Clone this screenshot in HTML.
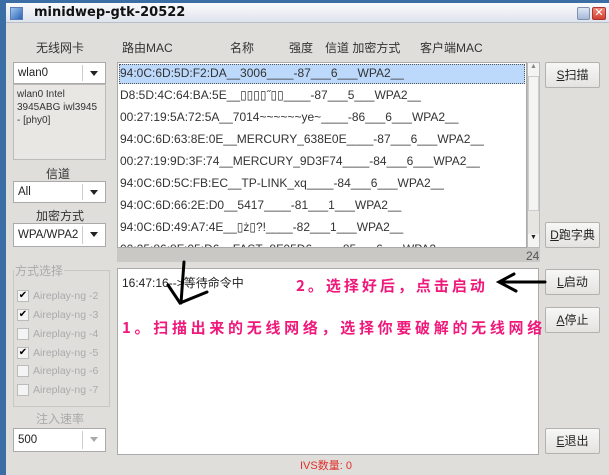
<!DOCTYPE html>
<html><head><meta charset="utf-8"><style>
*{margin:0;padding:0;box-sizing:border-box}
body{width:609px;height:475px;overflow:hidden;background:#3a6ea5;font-family:"Liberation Sans","Noto Sans CJK SC",sans-serif;font-size:12px;color:#222;position:relative}
.win{position:absolute;left:6px;top:3px;right:0;bottom:0;background:#dfdedb}
.title{position:absolute;left:6px;top:3px;right:0;height:20px;background:linear-gradient(#fafbfd,#dfe3ec);border-bottom:1px solid #b9bfca}
.title span{position:absolute;left:28px;top:2px;font-family:"DejaVu Sans",sans-serif;font-weight:bold;font-size:13px;color:#111}
.ab{position:absolute}
.lbl{position:absolute;font-size:12px;color:#333;white-space:nowrap}
.combo{position:absolute;background:#fff;border:1px solid #aaa;font-size:11.5px;padding:0 4px;line-height:20px;white-space:nowrap}
.combo:after{content:"";position:absolute;right:0;top:2px;bottom:2px;width:22px;border-left:1px solid #ccc;background:#fff}
.combo i{position:absolute;right:7px;top:8px;border:4px solid transparent;border-top:5px solid #222;z-index:2}
.btn{position:absolute;left:545px;width:55px;height:26px;background:linear-gradient(#f7f7f6,#e4e3e0);border:1px solid #b3b2ae;border-radius:2px;text-align:center;line-height:24px;font-size:12px;color:#222}
.row{position:absolute;left:120px;font-size:12px;white-space:nowrap;color:#333}
.cb{position:absolute;left:17px;width:12px;height:12px;border:1px solid #bbb;background:#f4f4f4;font-size:10px;line-height:10px;text-align:center;color:#000}
.cbl{position:absolute;left:33px;font-size:10.5px;color:#aaa}
.pink{position:absolute;color:#f0187a;font-weight:bold;font-size:15px;white-space:nowrap;font-family:"Noto Sans CJK SC",sans-serif;z-index:5}
</style></head><body>
<div class="win"></div>
<div class="title"><span>minidwep-gtk-20522</span></div>
<div class="ab" style="left:10px;top:7px;width:13px;height:13px;background:linear-gradient(135deg,#9cc7f1,#2c62b5);border:1px solid #5a7db5"></div>
<div class="ab" style="left:577px;top:7px;width:13px;height:13px;background:linear-gradient(#dde6f4,#a7b9d8);border:1px solid #7f90b0;border-radius:2px"></div>
<div class="ab" style="left:592px;top:7px;width:14px;height:13px;background:linear-gradient(#f08a7a,#d2402f);border:1px solid #a33;border-radius:2px;color:#fff;font-size:11px;line-height:11px;text-align:center">✕</div>

<div class="lbl" style="left:36px;top:39px">无线网卡</div>
<div class="lbl" style="left:122px;top:39px">路由MAC</div>
<div class="lbl" style="left:230px;top:39px">名称</div>
<div class="lbl" style="left:289px;top:39px">强度</div>
<div class="lbl" style="left:325px;top:39px">信道 加密方式</div>
<div class="lbl" style="left:420px;top:39px">客户端MAC</div>

<div class="combo" style="left:13px;top:62px;width:93px;height:22px">wlan0<i></i></div>
<div class="ab" style="left:13px;top:84px;width:93px;height:76px;border:1px solid #bbb;background:#e8e7e4;font-size:10px;padding:3px;line-height:13px;color:#333">wlan0 Intel 3945ABG iwl3945 - [phy0]</div>
<div class="lbl" style="left:46px;top:165px">信道</div>
<div class="combo" style="left:13px;top:181px;width:93px;height:22px">All<i></i></div>
<div class="lbl" style="left:36px;top:207px">加密方式</div>
<div class="combo" style="left:13px;top:223px;width:93px;height:24px;line-height:22px">WPA/WPA2<i></i></div>

<div class="ab" style="left:13px;top:270px;width:97px;height:137px;border:1px solid #c8c7c4"></div>
<div class="lbl" style="left:14px;top:262px;background:#dfdedb;color:#aaa;padding:0 1px">方式选择</div>
<div class="cb" style="top:290px">✔</div><div class="cbl" style="top:290px">Aireplay-ng -2</div>
<div class="cb" style="top:309px">✔</div><div class="cbl" style="top:309px">Aireplay-ng -3</div>
<div class="cb" style="top:328px"></div><div class="cbl" style="top:328px">Aireplay-ng -4</div>
<div class="cb" style="top:347px">✔</div><div class="cbl" style="top:347px">Aireplay-ng -5</div>
<div class="cb" style="top:365px"></div><div class="cbl" style="top:365px">Aireplay-ng -6</div>
<div class="cb" style="top:384px"></div><div class="cbl" style="top:384px">Aireplay-ng -7</div>
<div class="lbl" style="left:36px;top:410px;color:#aaa">注入速率</div>
<div class="combo" style="left:13px;top:428px;width:93px;height:24px;line-height:22px">500<i style="border-top-color:#aaa"></i></div>

<div class="ab" style="left:117px;top:62px;width:410px;height:186px;background:#fff;border:1px solid #aaa;overflow:hidden">
<div class="ab" style="left:1px;top:1px;right:1px;height:20px;background:#bcd9fb;border:1px dotted #555"></div>
<div class="ab" style="left:2px;top:179px;font-size:12px;white-space:nowrap;color:#333;line-height:14px">00:25:86:8F:05:D6__FAST_8F05D6____-85___6___WPA2</div>
</div>
<div class="row" style="top:66px">94:0C:6D:5D:F2:DA__3006____-87___6___WPA2__</div>
<div class="row" style="top:88px">D8:5D:4C:64:BA:5E__▯▯▯▯˝▯▯____-87___5___WPA2__</div>
<div class="row" style="top:110px">00:27:19:5A:72:5A__7014~~~~~~ye~____-86___6___WPA2__</div>
<div class="row" style="top:132px">94:0C:6D:63:8E:0E__MERCURY_638E0E____-87___6___WPA2__</div>
<div class="row" style="top:154px">00:27:19:9D:3F:74__MERCURY_9D3F74____-84___6___WPA2__</div>
<div class="row" style="top:176px">94:0C:6D:5C:FB:EC__TP-LINK_xq____-84___6___WPA2__</div>
<div class="row" style="top:198px">94:0C:6D:66:2E:D0__5417____-81___1___WPA2__</div>
<div class="row" style="top:220px">94:0C:6D:49:A7:4E__▯ż▯?!____-82___1___WPA2__</div>
<div class="ab" style="left:527px;top:62px;width:13px;height:186px;background:#e6e5e2;border:1px solid #bbb"></div>
<div class="ab" style="left:528px;top:63px;width:11px;height:14px;background:#f4f4f2;border-bottom:1px solid #ccc;font-size:7px;text-align:center;color:#888">▲</div>
<div class="ab" style="left:528px;top:76px;width:11px;height:135px;background:#f4f4f2;border:1px solid #ccc"></div>
<div class="ab" style="left:528px;top:234px;width:11px;height:13px;background:#f4f4f2;font-size:7px;text-align:center;color:#222">▼</div>
<div class="ab" style="left:117px;top:248px;width:423px;height:14px;background:#c9c8c5"></div>
<div class="lbl" style="left:526px;top:249px;color:#555">24</div>

<div class="ab" style="left:117px;top:268px;width:422px;height:187px;background:#fff;border:1px solid #aaa"></div>
<div class="lbl" style="left:122px;top:274px;color:#222">16:47:16--&gt;等待命令中</div>

<div class="btn" style="top:62px"><u>S</u>扫描</div>
<div class="btn" style="top:222px"><u>D</u>跑字典</div>
<div class="btn" style="top:269px"><u>L</u>启动</div>
<div class="btn" style="top:307px"><u>A</u>停止</div>
<div class="btn" style="top:428px"><u>E</u>退出</div>

<div class="pink" style="left:296px;top:275px;letter-spacing:3px">2。选择好后，点击启动</div>
<div class="pink" style="left:122px;top:317px;letter-spacing:3.7px">1。扫描出来的无线网络，选择你要破解的无线网络</div>
<svg class="ab" style="left:0;top:0;z-index:6" width="609" height="475"><g fill="none" stroke="#000" stroke-width="3" stroke-linecap="round">
<path d="M184 262 L181 303"/><path d="M168 285 L180 303 L207 292"/>
<path d="M545 282 L500 282"/><path d="M514 274 L499 282 L516 291"/></g></svg>
<div class="lbl" style="left:300px;top:457px;color:#e0302a;font-size:11px">IVS数量: 0</div>
</body></html>
